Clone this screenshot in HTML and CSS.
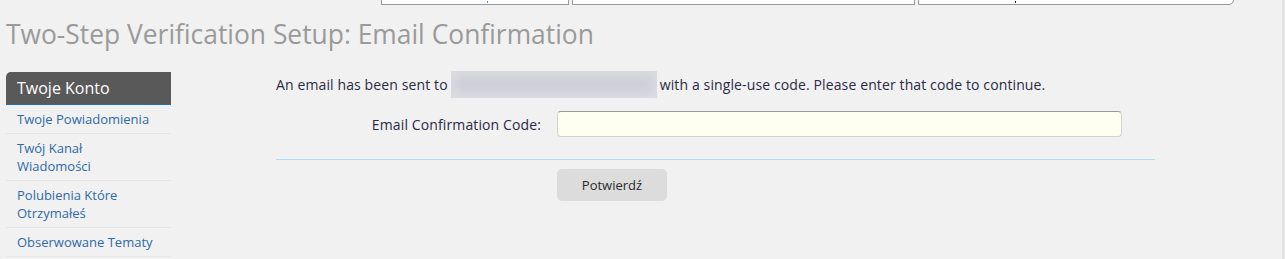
FILE: index.html
```html
<!DOCTYPE html>
<html lang="en">
<head>
    <meta charset="UTF-8">
    <meta name="viewport" content="width=device-width, initial-scale=1.0">
    <title>Two-Step Verification Setup: Email Confirmation</title>
    <link rel="stylesheet" href="styles.css">
</head>
<body>

    <!-- Top bar (cut off) -->
    <div class="topbar">
        <div class="top-box box-a"><span class="mark"></span></div>
        <div class="top-box box-b"></div>
        <div class="top-box box-c"><span class="mark dark"></span></div>
    </div>

    <h1 class="page-title">Two-Step Verification Setup: Email Confirmation</h1>

    <div class="layout">

        <!-- Sidebar -->
        <aside class="sidebar">
            <div class="sidebar-head">Twoje Konto</div>
            <ul class="sidebar-links">
                <li><a href="#">Twoje Powiadomienia</a></li>
                <li><a href="#">Twój Kanał<br>Wiadomości</a></li>
                <li><a href="#">Polubienia Które<br>Otrzymałeś</a></li>
                <li><a href="#">Obserwowane Tematy</a></li>
            </ul>
        </aside>

        <!-- Main Content -->
        <main class="content">
            <p class="intro">An email has been sent to <span class="hidden-email"></span> with a single-use code. Please enter that code to continue.</p>

            <div class="form-row">
                <label class="form-label" for="code">Email Confirmation Code:</label>
                <input class="form-input" type="text" id="code">
            </div>

            <div class="form-submit">
                <button class="btn">Potwierdź</button>
            </div>
        </main>

    </div>

</body>
</html>
```

FILE: styles.css
```css
/* Global Styles */
body {
    font-family: "Open Sans", "DejaVu Sans", sans-serif;
    background-color: #f1f1f1;
    color: #2b2b45;
    margin: 0;
    border-right: 3px solid #e2e2e2;
    min-height: 259px;
    box-sizing: border-box;
    overflow: hidden;
}

/* Top bar */
.topbar {
    display: flex;
    gap: 3px;
    padding-left: 381px;
    height: 5px;
    overflow: hidden;
}

.top-box {
    height: 30px;
    margin-top: -25px;
    background-color: #fff;
    border: 1px solid #999;
    box-sizing: border-box;
    position: relative;
}

.box-a { width: 188px; }
.box-b { width: 343px; }
.box-c { width: 316px; border-bottom-right-radius: 5px; }

.mark {
    position: absolute;
    left: 105px;
    bottom: 1px;
    width: 1px;
    height: 2px;
    background-color: #4a90d9;
}

.mark.dark {
    left: 96px;
    background-color: #202050;
}

/* Title */
.page-title {
    font-size: 26.4px;
    font-weight: normal;
    color: #9a9a9a;
    margin: 12px 0 0 6px;
    line-height: 34px;
}

/* Layout */
.layout {
    display: flex;
    gap: 105px;
    padding: 21px 0 0 6px;
}

/* Sidebar */
.sidebar {
    width: 165px;
    flex-shrink: 0;
}

.sidebar-head {
    background-color: #595959;
    color: #fff;
    font-size: 16px;
    line-height: 32px;
    padding: 0 11px;
    border-top-left-radius: 5px;
    border-bottom: 1px solid #1f6fb2;
}

.sidebar-links {
    list-style: none;
    margin: 0;
    padding: 0;
}

.sidebar-links li {
    border-bottom: 1px solid #e5e5e5;
    padding: 5px 11px;
    font-size: 13px;
    line-height: 18px;
}

.sidebar-links a {
    color: #2f6aa8;
    text-decoration: none;
}

/* Main Content */
.content {
    width: 879px;
}

.intro {
    font-size: 14px;
    letter-spacing: 0.12px;
    margin: -1px 0 0;
    line-height: 27px;
    display: flex;
    align-items: center;
    gap: 3px;
}

.hidden-email {
    display: inline-block;
    width: 206px;
    height: 27px;
    background-color: #cfcfd7;
    box-shadow: inset 0 0 10px 4px #dcdce2;
}

.form-row {
    display: flex;
    align-items: center;
    gap: 16px;
    margin-top: 13px;
    padding-bottom: 22px;
    border-bottom: 1px solid #abdff6;
}

.form-label {
    width: 265px;
    text-align: right;
    font-size: 14px;
    letter-spacing: 0.12px;
}

.form-input {
    width: 565px;
    height: 26px;
    box-sizing: border-box;
    background-color: #fefff0;
    border: 1px solid #d4d4d4;
    border-top-color: #9a9a9a;
    border-radius: 4px;
    margin: 0;
}

.form-submit {
    padding: 9px 0 0 281px;
}

.btn {
    width: 110px;
    height: 32px;
    background-color: #dcdcdc;
    color: #2b2b2b;
    font-family: "Open Sans", sans-serif;
    font-size: 13px;
    border: none;
    border-radius: 5px;
    cursor: pointer;
}
```
